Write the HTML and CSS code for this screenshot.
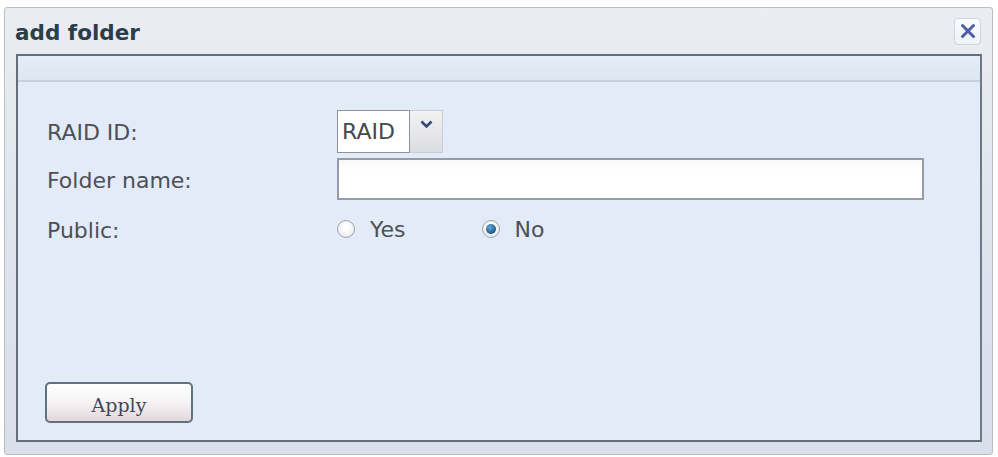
FILE: index.html
```html
<!DOCTYPE html>
<html>
<head>
<meta charset="utf-8">
<link rel="stylesheet" href="styles.css">
</head>
<body>
<div class="window">
  <div class="titlebar">
    <span class="title">add folder</span>
    <span class="close">
      <svg width="16" height="16" viewBox="0 0 16 16"><path d="M2.5 2.5 L13.5 13.5 M13.5 2.5 L2.5 13.5" stroke="#4b5fa6" stroke-width="3" stroke-linecap="round" fill="none"/></svg>
    </span>
  </div>
  <div class="panel">
    <div class="band"></div>
    <div class="form">
      <div class="label">RAID ID:</div>
      <div class="control">
        <div class="select">
          <span class="select-value">RAID</span>
          <span class="select-arrow">
            <svg width="13" height="9" viewBox="0 0 13 9"><path d="M1.5 1.5 L6.5 6.5 L11.5 1.5" stroke="#33467a" stroke-width="2.6" fill="none"/></svg>
          </span>
        </div>
      </div>
      <div class="label">Folder name:</div>
      <div class="control"><div class="textinput"></div></div>
      <div class="label">Public:</div>
      <div class="control radios">
        <span class="radio-item"><span class="radio"></span><span>Yes</span></span>
        <span class="radio-item"><span class="radio checked"></span><span>No</span></span>
      </div>
    </div>
    <div class="actions">
      <button class="apply">Apply</button>
    </div>
  </div>
</div>
</body>
</html>
```

FILE: styles.css
```css
html, body {
  margin: 0;
  background: #ffffff;
}
body {
  padding: 7px 5px 0 4px;
  font-family: "DejaVu Sans", Verdana, sans-serif;
}
.window {
  width: 987px;
  height: 446px;
  border: 1px solid #b7bcc5;
  border-radius: 3px;
  background: linear-gradient(#eaedf2, #dde3ec 60%, #d9e0ea);
  display: flex;
  flex-direction: column;
}
.titlebar {
  height: 46px;
  display: flex;
  align-items: center;
  justify-content: space-between;
  padding: 0 11px 0 10px;
}
.title {
  font-weight: bold;
  font-size: 21.5px;
  color: #2b3d48;
  margin-top: 2px;
}
.close {
  width: 25px;
  height: 25px;
  border: 1px solid #cdd4de;
  border-radius: 4px;
  background: linear-gradient(#fbfcfd, #eef1f6);
  display: flex;
  align-items: center;
  justify-content: center;
}
.panel {
  margin: 0 0 0 11px;
  width: 962px;
  height: 384px;
  border: 2px solid #646d79;
  border-right-color: #6f7884;
  background: #e2ebf7;
  display: flex;
  flex-direction: column;
}
.band {
  height: 24px;
  background: linear-gradient(#e4ecf7, #dee6f1);
  border-bottom: 2px solid #c7d1dd;
}
.form {
  margin: 28px 0 0 29px;
  display: grid;
  grid-template-columns: 290px 1fr;
  grid-template-rows: 43px 42px 48px;
  row-gap: 5px;
  align-items: center;
}
.label {
  font-size: 22px;
  color: #4d5055;
  margin-top: 2px;
}
.control {
  display: flex;
  align-items: center;
}
.select {
  display: flex;
  height: 43px;
  width: 106px;
}
.select-value {
  width: 73px;
  box-sizing: border-box;
  background: #ffffff;
  border: 1px solid #8d939b;
  font-size: 22px;
  color: #45484d;
  display: flex;
  align-items: center;
  padding-left: 4px;
}
.select-arrow {
  flex: 1;
  border: 1px solid #c9ced5;
  border-left: none;
  background: linear-gradient(#f2f2f3, #dcdde0);
  display: flex;
  justify-content: center;
  padding-top: 9px;
  box-sizing: border-box;
}
.textinput {
  width: 587px;
  height: 42px;
  box-sizing: border-box;
  border: 2px solid #959ca5;
  background: linear-gradient(#f7f8f9, #ffffff 30%);
}
.radios {
  gap: 76px;
  font-size: 22px;
  color: #4d5055;
}
.radio-item {
  display: flex;
  align-items: center;
  gap: 15px;
}
.radio {
  width: 18px;
  height: 18px;
  box-sizing: border-box;
  border-radius: 50%;
  border: 1px solid #9da4ad;
  background: radial-gradient(circle at 50% 40%, #ffffff 20%, #dfe2e6);
  display: inline-flex;
  align-items: center;
  justify-content: center;
}
.radio.checked::after {
  content: "";
  width: 10px;
  height: 10px;
  border-radius: 50%;
  background: radial-gradient(circle at 40% 35%, #6aaad6, #1a5684 70%);
}
.actions {
  margin-top: auto;
  padding: 0 0 17px 27px;
}
.apply {
  width: 148px;
  height: 41px;
  border: 2px solid #5d7381;
  border-radius: 5px;
  background: linear-gradient(#ffffff, #f6f3f4 50%, #e3d7db);
  font-family: "DejaVu Serif", serif;
  font-size: 19px;
  color: #3f4858;
  padding: 4px 0 0 0;
}
```
